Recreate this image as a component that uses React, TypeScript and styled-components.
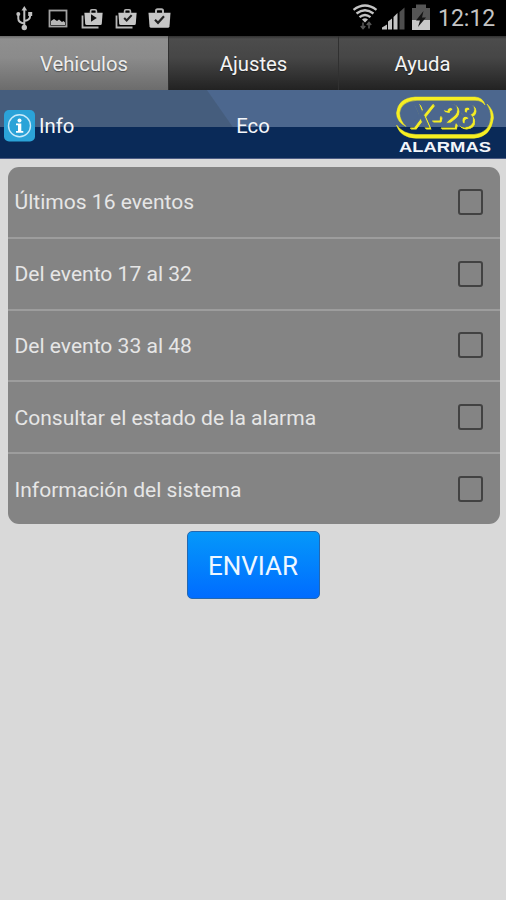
import React from "react";
import styled, { createGlobalStyle } from "styled-components";

const GlobalStyle = createGlobalStyle`
  body { margin: 0; background: #d9d9d9; font-family: Roboto, "Noto Sans", sans-serif; }
  * { box-sizing: border-box; }
`;

const Screen = styled.div`
  width: 506px;
  height: 900px;
  display: flex;
  flex-direction: column;
  background: #d9d9d9;
  overflow: hidden;
`;

const StatusBar = styled.header`
  height: 36px;
  flex: none;
  display: flex;
  justify-content: space-between;
  background: #000;
`;

const StatusIcons = styled.svg`
  display: block;
  height: 36px;
`;

const StatusRight = styled.div`
  display: flex;
`;

const Clock = styled.time`
  width: 68px;
  color: #c4c4c4;
  font-size: 23px;
  line-height: 37px;
  white-space: nowrap;
`;

const Tabs = styled.nav`
  height: 54px;
  flex: none;
  display: grid;
  grid-template-columns: 168px 170px 168px;
`;

const Tab = styled.button<{ $active?: boolean }>`
  border: 0;
  border-left: ${(p) => (p.$active ? "0" : "1px solid #303030")};
  padding: 2px 0 0;
  color: ${(p) => (p.$active ? "#ececec" : "#f4f4f4")};
  font: 400 20.3px Roboto, sans-serif;
  text-shadow: 0 1px 1px rgba(0, 0, 0, 0.4);
  background: ${(p) =>
    p.$active
      ? "linear-gradient(#696969 0, #8f8f8f 3px, #8b8b8b 40%, #6c6c6c 100%)"
      : "linear-gradient(#303030 0, #4c4c4c 3px, #464646 40%, #222 100%)"};
`;

const TitleBar = styled.div`
  height: 69px;
  flex: none;
  display: grid;
  grid-template-columns: 168px 170px 168px;
  border-bottom: 1px solid #4c5c84;
  background:
    linear-gradient(transparent 37px, #0a2a58 37px),
    linear-gradient(55deg, #455d7d 0, #455d7d 208px, #4c678e 209px);
`;

const InfoButton = styled.button`
  display: flex;
  align-items: center;
  gap: 4px;
  padding: 0 0 0 4px;
  border: 0;
  background: none;
  color: #f5f7fa;
  font: 400 20.3px Roboto, sans-serif;
`;

const Title = styled.h1`
  margin: 0;
  text-align: center;
  color: #f5f7fa;
  font-size: 20.300px;
  font-weight: 400;
  line-height: 72px;
`;

const Logo = styled.svg`
  display: block;
  justify-self: end;
`;

const Options = styled.ul`
  list-style: none;
  flex: none;
  height: 357px;
  margin: 8px 6.5px 0 7.5px;
  padding: 0;
  display: flex;
  flex-direction: column;
  border-radius: 11px;
  overflow: hidden;
  background: #848484;
`;

const Option = styled.li`
  flex: 1;
  display: flex;
  align-items: center;
  justify-content: space-between;
  padding: 0 17px 0 7px;
  color: #e6e6e6;
  font-size: 21.050px;
  &:not(:last-child) {
    border-bottom: 2px solid #9d9d9d;
  }
`;

const CheckBox = styled.input`
  appearance: none;
  width: 25px;
  height: 26px;
  margin: 0;
  border: 2.5px solid #424242;
  border-radius: 3px;
  background: transparent;
`;

const SendButton = styled.button`
  flex: none;
  align-self: center;
  width: 133px;
  height: 68px;
  margin-top: 7px;
  padding: 2px 0 0;
  border: 1px solid #2468b0;
  border-radius: 5px;
  background: linear-gradient(#0598fa, #006cff);
  color: #eff7ff;
  font: 400 26px Roboto, sans-serif;
`;

const bagBody = "M-11 -5.5h22l-1 13.500q-.2 1.500-1.700 1.500h-16.600q-1.500 0-1.700-1.500z";

const Bag = () => (
  <>
    <path d={bagBody} fill="#c6c6c6" />
    <path d="M-3.500-5v-2.500q0-1.500 1.500-1.500h4q1.500 0 1.500 1.500v2.500" fill="none" stroke="#b4b4b4" strokeWidth="2" />
  </>
);

const NotificationIcons = () => (
  <StatusIcons width="180" viewBox="0 0 180 36">
    <g stroke="#c0c0c0" fill="none" strokeWidth="2">
      <path d="M24.300 9v17M24.300 23.500q-6-1-6-5v-4M24.300 21q5.700-1 5.700-4.500v-3" />
      <path d="M24.300 6l2.800 4.500h-5.600z" fill="#c0c0c0" stroke="none" />
      <circle cx="24.300" cy="27.500" r="2.700" fill="#c0c0c0" stroke="none" />
      <circle cx="18.300" cy="14" r="2" fill="#c0c0c0" stroke="none" />
      <path d="M28.200 12h4v4h-4z" fill="#c0c0c0" stroke="none" />
    </g>
    <rect x="49.500" y="10.500" width="17" height="16" fill="none" stroke="#a2a2a2" strokeWidth="1.800" />
    <path d="M51 25v-4l3-2 3 2 2-1.500 3 2.500 1.500-1 1.500 1.500V25z" fill="#b8b8b8" />
    <g transform="translate(93.500 17.200) scale(.83)"><Bag /><path d="M-3-3.500v9l7-4.500z" fill="#111" /></g>
    <path d="M82.500 15.500v12h16" fill="none" stroke="#b6b6b6" strokeWidth="1.800" />
    <g transform="translate(127.500 17.200) scale(.83)"><Bag /><path d="M-4 1l3 3 6-6.500" fill="none" stroke="#222" strokeWidth="2.500" /></g>
    <path d="M116.500 15.500v12h16" fill="none" stroke="#b6b6b6" strokeWidth="1.800" />
    <g transform="translate(159.500 18.300)"><Bag /><path d="M-4.500 1.500l3 3 6-6.500" fill="none" stroke="#222" strokeWidth="2.200" /></g>
  </StatusIcons>
);

const SystemIcons = () => (
  <StatusIcons width="86" viewBox="352 0 86 36">
    <g fill="none" stroke="#c4c4c4" strokeWidth="2.300">
      <path d="M353.500 9.800q11.500-8.500 23 0M356.500 13.500q8.500-6.500 17 0M359.500 17.200q5.500-4.500 11 0" />
    </g>
    <path d="M362 19.500q3-2.500 6 0l-3 3z" fill="#c4c4c4" />
    <path d="M363 22.500v6M360.800 26l2.200 2.500 2.200-2.500M369 28.500v-6M366.800 25l2.200-2.500 2.200 2.500" stroke="#555" strokeWidth="1.600" fill="none" />
    <path d="M382 29.500v-2l5-3v5z" fill="#c4c4c4" />
    <path d="M388 21.500l4-3v11h-4z" fill="#c4c4c4" />
    <path d="M393.500 17l4-4v16.500h-4z" fill="#c4c4c4" />
    <path d="M399.500 12l5-4.500v22h-5z" fill="#4e4e4e" />
    <path d="M412 8h4V4.500h10V8h4v12h-18z" fill="#555" />
    <path d="M412 20h18v10h-18z" fill="#c8c8c8" />
    <path d="M423.500 11l-7.500 9.500h4l-2 6.500 8-9.500h-4z" fill="#151515" />
  </StatusIcons>
);

const InfoIcon = () => (
  <svg width="31" height="32" viewBox="0 0 31 32">
    <rect width="31" height="31.500" rx="5" fill="#2ba3d8" />
    <circle cx="15.500" cy="15.800" r="11" fill="none" stroke="#c9eafa" strokeWidth="1.400" />
    <circle cx="15.500" cy="10.500" r="2" fill="#fff" />
    <path d="M12 13.500h5.300v7.500h2v1.800h-7.300v-1.800h2v-5.700h-2z" fill="#fff" />
  </svg>
);

const ModelMark = styled.text`
  font: italic 700 34px "Liberation Sans", sans-serif;
  filter: drop-shadow(1.3px 1px 0 #f6ee22) drop-shadow(1.5px 1px 0 #f6ee22);
`;

const BrandLogo = () => (
  <Logo width="116" height="68" viewBox="390 90 116 68">
    <defs>
      <linearGradient id="bar" gradientUnits="userSpaceOnUse" x1="0" x2="0" y1="90" y2="158">
        <stop offset=".544" stopColor="#4c678e" />
        <stop offset=".544" stopColor="#0a2a58" />
      </linearGradient>
    </defs>
    <ModelMark x="411" y="126.500" textLength="63" lengthAdjust="spacingAndGlyphs" fill="url(#bar)" stroke="url(#bar)" strokeWidth=".8">X-28</ModelMark>
    <g fill="#f6ee22" stroke="#f6ee22" strokeWidth=".5">
      <path d="M485 105Q482 100.500 475 100.300H417Q401 101 399.500 113Q400 121 406 126.500Q396.500 121.500 396.500 113Q398 98 415 97H475Q483 97.500 485 105z" />
      <path d="M396.500 125Q403 134 416 134.500H474Q490 133 491 117Q491 110 487 104Q493.500 110 493.500 118Q491 137 474 138.300H416Q400 137.500 396.500 125z" />
    </g>
    <text x="399" y="151.500" textLength="92" lengthAdjust="spacingAndGlyphs" fontFamily="Liberation Sans" fontWeight="700" fontSize="15" fill="#f2f5fa">ALARMAS</text>
  </Logo>
);

const options = [
  "Últimos 16 eventos",
  "Del evento 17 al 32",
  "Del evento 33 al 48",
  "Consultar el estado de la alarma",
  "Información del sistema",
];

export default function App() {
  return (
    <Screen>
      <GlobalStyle />
      <StatusBar>
        <NotificationIcons />
        <StatusRight>
          <SystemIcons />
          <Clock>12:12</Clock>
        </StatusRight>
      </StatusBar>
      <Tabs>
        <Tab $active>Vehiculos</Tab>
        <Tab>Ajustes</Tab>
        <Tab>Ayuda</Tab>
      </Tabs>
      <TitleBar>
        <InfoButton><InfoIcon />Info</InfoButton>
        <Title>Eco</Title>
        <BrandLogo />
      </TitleBar>
      <Options>
        {options.map((label) => (
          <Option key={label}>
            {label}
            <CheckBox type="checkbox" aria-label={label} />
          </Option>
        ))}
      </Options>
      <SendButton>ENVIAR</SendButton>
    </Screen>
  );
}
